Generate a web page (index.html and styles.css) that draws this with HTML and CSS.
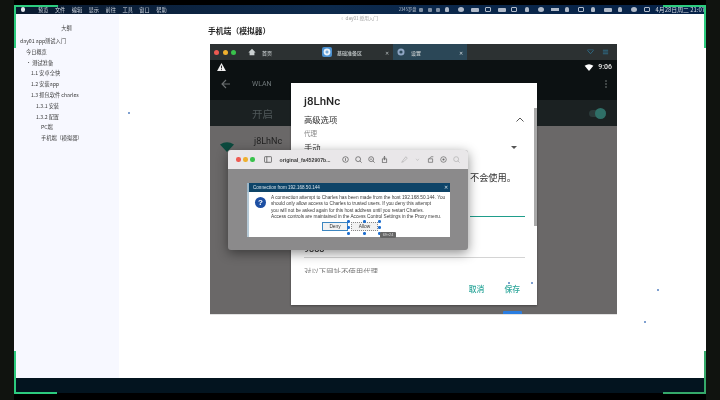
FILE: index.html
```html
<!DOCTYPE html>
<html lang="zh-CN">
<head>
<meta charset="utf-8">
<title>day01 app测试入门</title>
<link rel="stylesheet" href="styles.css">
</head>
<body>
<div class="stage">
  <div class="screen">
    <div class="menubar">
      <div class="menu-left">
        <span class="apple"></span>
        <span>预览</span><span>文件</span><span>编辑</span><span>显示</span><span>前往</span><span>工具</span><span>窗口</span><span>帮助</span>
      </div>
      <div class="menu-right">
        <span class="menu-app">2345罗盘</span>
        <span class="tray t-s"></span><span class="tray t-s"></span><span class="tray t-s"></span>
        <span class="tray t-d"></span><span class="tray t-a"></span><span class="tray t-b"></span><span class="tray t-c"></span><span class="tray t-b"></span><span class="tray t-c"></span><span class="tray t-d"></span><span class="tray t-a"></span><span class="tray t-e"></span><span class="tray t-d"></span><span class="tray t-c"></span><span class="tray t-d"></span><span class="tray t-b"></span><span class="tray t-d"></span><span class="tray t-a"></span><span class="tray t-c"></span>
        <span class="clock">4月28日周二 21:07</span>
      </div>
    </div>
    <div class="page">
      <aside class="outline">
        <div class="outline-head">大纲</div>
        <ul class="outline-list">
          <li class="l0">day01 app测试入门</li>
          <li class="l1">今日概览</li>
          <li class="l1">· 测试准备</li>
          <li class="l2">1.1 安卓全快</li>
          <li class="l2">1.2 安装app</li>
          <li class="l2">1.3 抓包软件 charles</li>
          <li class="l3">1.3.1 安装</li>
          <li class="l3">1.3.2 配置</li>
          <li class="l4">PC端</li>
          <li class="l4">手机端（模拟器）</li>
        </ul>
      </aside>
      <main class="doc">
        <div class="doc-title">▫ day01 授用入门</div>
        <h2 class="doc-h">手机端（模拟器）</h2>
        <section class="emu">
          <div class="tabs">
            <div class="lights"><i class="red"></i><i class="amber"></i><i class="green"></i></div>
            <div class="tab tab-home">
              <svg class="tab-ico" viewBox="0 0 10 10"><path d="M5 1 0.5 5.500H2V9H8V5.500H9.500Z" fill="#c9cfd0"/></svg>
              <span>首页</span>
            </div>
            <div class="tab tab-sim">
              <svg class="tab-ico sim-ico" viewBox="0 0 10 10"><rect width="10" height="10" rx="2" fill="#4a90d0"/><circle cx="5" cy="5" r="3.400" fill="#e8f1fa"/><path d="M3.400 5H6.600M5 3.400V6.600" stroke="#4a90d0" stroke-width="1"/></svg>
              <span>基础准备区</span>
              <b class="x">✕</b>
            </div>
            <div class="tab tab-set">
              <svg class="tab-ico" viewBox="0 0 10 10"><circle cx="5" cy="5" r="4.400" fill="#8fa6c4"/><circle cx="5" cy="5" r="2" fill="#2c4a5c"/></svg>
              <span>设置</span>
              <b class="x">✕</b>
            </div>
            <div class="win-btns">
              <svg viewBox="0 0 8 6" class="win-ico"><path d="M.5 1 4 5 7.500 1" fill="none" stroke="#2f6f8c"/><path d="M.5 .5H7.500" stroke="#2f6f8c" stroke-width=".6"/></svg>
              <svg viewBox="0 0 8 6" class="win-ico"><path d="M1 1H7M1 3H7M1 5H7" stroke="#2f6f8c"/></svg>
            </div>
          </div>
          <div class="status">
            <svg class="warn" viewBox="0 0 10 9"><path d="M5 0 10 9H0Z" fill="#f1f1f1"/><path d="M5 3V6M5 7V8" stroke="#111"/></svg>
            <svg class="wifi" viewBox="0 0 10 8"><path d="M0 2Q5-1.500 10 2L5 8Z" fill="#fff"/></svg>
            <span class="time">9:06</span>
          </div>
          <div class="appbar">
            <svg class="back" viewBox="0 0 10 10"><path d="M9 5H1.500M5 1 1 5 5 9" fill="none" stroke="#6b7071" stroke-width="1.100"/></svg>
            <span class="appbar-t">WLAN</span>
            <span class="dots"><i></i><i></i><i></i></span>
          </div>
          <div class="toggle-row">
            <span>开启</span>
            <span class="switch"><i></i></span>
          </div>
          <div class="net-row">
            <svg class="net-wifi" viewBox="0 0 14 10"><path d="M0 2.500Q7-2 14 2.500L7 10Z" fill="#0c4a3e"/></svg>
            <span>j8LhNc</span>
          </div>

          <div class="dialog">
            <h3>j8LhNc</h3>
            <div class="adv"><span>高级选项</span><svg viewBox="0 0 8 5" class="chev"><path d="M.5 4.500 4 1 7.500 4.500" fill="none" stroke="#555" stroke-width="1"/></svg></div>
            <div class="lbl">代理</div>
            <div class="sel"><span>手动</span><i class="caret"></i></div>
            <div class="warn-t">不会使用。</div>
            <div class="green-line"></div>
            <div class="port">9888</div>
            <div class="port-line"></div>
            <div class="bypass"><span>对以下网址不使用代理</span></div>
            <div class="actions"><span>取消</span><span>保存</span></div>
            <div class="scroll"></div>
          </div>

          <div class="preview">
            <div class="pv-bar">
              <div class="lights pv-lights"><i class="red"></i><i class="amber"></i><i class="green"></i></div>
              <svg class="pv-ico pv-side" viewBox="0 0 10 8"><rect x=".5" y=".5" width="9" height="7" rx="1" fill="none" stroke="#555"/><path d="M3.500 .5V7.500" stroke="#555"/></svg>
              <span class="pv-name">original_fa452907b...</span>
              <div class="pv-tools">
                <svg class="pv-ico" viewBox="0 0 10 10"><circle cx="5" cy="5" r="4" fill="none" stroke="#555"/><path d="M5 3V7" stroke="#555"/></svg>
                <svg class="pv-ico" viewBox="0 0 10 10"><circle cx="4.500" cy="4.500" r="3.500" fill="none" stroke="#555"/><path d="M7 7 9.500 9.500" stroke="#555"/></svg>
                <svg class="pv-ico" viewBox="0 0 10 10"><circle cx="4.500" cy="4.500" r="3.500" fill="none" stroke="#555"/><path d="M7 7 9.500 9.500M3 4.500H6" stroke="#555"/></svg>
                <svg class="pv-ico" viewBox="0 0 10 10"><path d="M2 4H8V9.500H2ZM5 6V.5M3.500 2 5 .5 6.500 2" fill="none" stroke="#555"/></svg>
                <svg class="pv-ico faint gap" viewBox="0 0 10 10"><path d="M1 9 3 6 7 1 9 3 4 8Z" fill="none" stroke="#999"/></svg>
                <svg class="pv-ico faint" viewBox="0 0 10 10"><path d="M3 4 5 6.500 7 4" fill="none" stroke="#aaa"/></svg>
                <svg class="pv-ico" viewBox="0 0 10 10"><path d="M2 4H8V9H2ZM3 4Q5 0 9 1" fill="none" stroke="#666"/></svg>
                <svg class="pv-ico" viewBox="0 0 10 10"><circle cx="5" cy="5" r="4" fill="none" stroke="#666"/><circle cx="5" cy="5" r="1.500" fill="#666"/></svg>
                <svg class="pv-ico faint" viewBox="0 0 10 10"><circle cx="4.500" cy="4.500" r="3.500" fill="none" stroke="#999"/><path d="M7 7 9.500 9.500" stroke="#999"/></svg>
              </div>
            </div>
            <div class="pv-body">
              <div class="charles">
                <div class="ch-title"><span>Connection from 192.168.50.144</span><b>✕</b></div>
                <div class="ch-body">
                  <div class="ch-msg">
                    <span class="q">?</span>
                    <p>A connection attempt to Charles has been made from the host 192.168.50.144. You<br>should only allow access to Charles to trusted users. If you deny this attempt<br>you will not be asked again for this host address until you restart Charles.<br>Access controls are maintained in the Access Control Settings in the Proxy menu.</p>
                  </div>
                  <div class="ch-btns">
                    <span class="btn deny">Deny</span>
                    <span class="btn allow">Allow</span>
                  </div>
                </div>
                <i class="h h1"></i><i class="h h2"></i><i class="h h3"></i><i class="h h4"></i><i class="h h5"></i><i class="h h6"></i><i class="h h7"></i><i class="h h8"></i>
                <span class="tip">69×24</span>
              </div>
            </div>
          </div>
          <div class="blue-tag"></div>
        </section>
        <i class="speck s1"></i><i class="speck s2"></i><i class="speck s3"></i><i class="speck s4"></i><i class="speck s5"></i>
      </main>
    </div>
    <div class="dock"></div>
  </div>
  <i class="corner tl-h"></i><i class="corner tl-v"></i>
  <i class="corner tr-h"></i><i class="corner tr-v"></i>
  <i class="corner bl-h"></i><i class="corner bl-v"></i>
  <i class="corner br-h"></i><i class="corner br-v"></i>
</div>
</body>
</html>
```

FILE: styles.css
```css
* { box-sizing: border-box; }
html, body { margin: 0; padding: 0; width: 720px; height: 400px; overflow: hidden; background: #10130f; }
body { font-family: "Noto Sans CJK SC", "Liberation Sans", sans-serif; }
i, b { font-style: normal; font-weight: normal; }

.stage { position: relative; width: 720px; height: 400px; padding: 0 14px; background: #10130f; filter: blur(0.35px); }
.screen { display: flex; flex-direction: column; width: 692px; height: 400px; padding-top: 5px; background: #000; }

/* menubar */
.menubar { flex: 0 0 9px; display: flex; align-items: center; justify-content: space-between; background: linear-gradient(90deg, #0a1a30, #0d2a4c 45%, #062248 100%); color: #d5dbe4; font-size: 5.2px; line-height: 9px; }
.menu-left { display: flex; align-items: center; padding-left: 7px; gap: 6.500px; }
.apple { width: 4px; height: 5px; border-radius: 2px; background: #e4e8ee; margin-right: 6.500px; }
.menu-right { display: flex; align-items: center; padding-right: 1px; }
.menu-app { margin-right: 3px; opacity: .85; font-size: 4.200px; white-space: nowrap; }
.tray { display: block; height: 5px; background: #cfd6e0; opacity: .85; }
.t-a { width: 6px; margin-right: 7.300px; border-radius: 50%; }
.t-b { width: 8px; margin-right: 5.300px; height: 4px; border-radius: 1px; }
.t-c { width: 6px; margin-right: 7.300px; background: transparent; border: 1px solid #cfd6e0; border-radius: 1px; }
.t-d { width: 4px; margin-right: 9.300px; border-radius: 2px 2px 1px 1px; }
.t-e { width: 8px; margin-right: 5.300px; height: 3px; }
.t-s { width: 4px; height: 4px; margin-right: 4.500px; opacity: .6; border-radius: 1px; }
.clock { font-size: 5.900px; margin-left: -2px; white-space: nowrap; }

/* page */
.page { flex: 0 0 364px; display: flex; background: #fff; }
.outline { flex: 0 0 105px; background: #f7f8ff; color: #3a3a3a; font-size: 5.200px; }
.outline-head { text-align: center; padding: 9px 0 0; height: 22px; line-height: 10px; }
.outline-list { list-style: none; margin: 0; padding: 0; }
.outline-list li { height: 10.800px; line-height: 10.800px; white-space: nowrap; }
.l0 { padding-left: 6px; }
.l1 { padding-left: 12px; }
.l2 { padding-left: 17px; }
.l3 { padding-left: 22px; }
.l4 { padding-left: 27px; }

.doc { position: relative; flex: 1; padding-left: 89px; }
.doc-title { height: 8px; padding-left: 132px; font-size: 4.600px; line-height: 8px; color: #9a9a9a; white-space: nowrap; }
.doc-h { margin: 3px 0 0; height: 12px; font-size: 7.800px; line-height: 12px; font-weight: 700; color: #2a2a2a; }

/* emulator */
.emu { position: relative; width: 407px; height: 271px; margin: 7px 0 0 2px; display: flex; flex-direction: column; background: #6a6868; border-bottom: 1px solid #e2e2e2; overflow: hidden; }
.tabs { flex: 0 0 16px; display: flex; align-items: center; background: #2c3132; color: #c2c8c9; font-size: 5px; font-weight: 500; }
.lights { display: flex; gap: 3.500px; padding-left: 4px; }
.lights i { width: 5px; height: 5px; border-radius: 50%; }
.red { background: #ee5a52; }
.amber { background: #efb02e; }
.green { background: #39c24c; }
.tab { display: flex; align-items: center; height: 16px; }
.tab-ico { width: 8px; height: 8px; margin-right: 6px; }
.tab-home { margin-left: 12px; width: 74px; }
.tab-sim { width: 71px; }
.tab-sim .sim-ico { width: 10px; height: 10px; margin-right: 5px; }
.tab-sim .x { margin-left: 23px; }
.tab-set { width: 74px; padding-left: 4px; background: #2b4757; }
.tab-set .x { margin-left: 38px; color: #d5dde0; }
.x { font-size: 5px; color: #b9bfc0; }
.win-btns { margin-left: auto; display: flex; gap: 8px; padding-right: 8px; }
.win-ico { width: 7px; height: 6px; }

.status { flex: 0 0 14px; display: flex; align-items: center; padding: 0 5px 0 7px; background: #0c1112; color: #e8e8e8; font: 500 7px/8px Roboto, sans-serif; }
.warn { width: 9px; height: 8px; }
.wifi { width: 10px; height: 7px; margin-left: auto; margin-right: 4px; }
.appbar { flex: 0 0 26px; display: flex; align-items: center; padding: 0 10px 6px 11px; background: #0c1112; color: #70787a; font: 7px/10px Roboto, sans-serif; }
.back { width: 10px; height: 10px; margin-right: 21px; }
.dots { margin-left: auto; display: flex; flex-direction: column; gap: 1px; }
.dots i { width: 2px; height: 2px; border-radius: 50%; background: #4e5455; }
.toggle-row { flex: 0 0 26px; display: flex; align-items: center; justify-content: space-between; padding: 0 11px 0 42px; background: #1b2122; color: #50585a; font-size: 10.500px; }
.switch { position: relative; display: block; width: 17px; height: 7px; border-radius: 4px; background: #2b3a3a; }
.switch i { position: absolute; right: 0; top: -2px; width: 11px; height: 11px; border-radius: 50%; background: #2f6f67; }
.net-row { flex: 1; display: flex; align-items: flex-start; padding: 9px 0 0 10px; color: #1f1f1f; font: 9px/13px Roboto, sans-serif; }
.net-wifi { width: 14px; height: 10px; margin: 7px 20px 0 0; }

/* android dialog */
.dialog { position: absolute; left: 81px; top: 39px; width: 246px; height: 222px; padding: 10px 12px 0 13px; background: #fff; color: #2c2c2c; box-shadow: 0 1px 2px rgba(0,0,0,.35); }
.dialog h3 { margin: 0; font: 500 11.500px/16px Roboto, sans-serif; color: #262626; }
.adv { display: flex; justify-content: space-between; align-items: center; height: 12px; margin-top: 4px; font-size: 8.300px; line-height: 12px; }
.chev { width: 8px; height: 5px; margin-right: 1px; }
.lbl { margin-top: 2px; height: 12px; line-height: 12px; font-size: 6.500px; color: #8a8a8a; }
.sel { display: flex; justify-content: space-between; align-items: center; height: 14px; margin-top: 1px; padding-right: 8px; font-size: 8.300px; }
.caret { border: 3px solid transparent; border-top: 3.500px solid #555; border-bottom: 0; }
.warn-t { margin-top: 16px; height: 14px; padding-left: 166px; font-size: 9.200px; line-height: 14px; color: #333; white-space: nowrap; }
.green-line { margin: 32px 0 0 166px; height: 1px; background: #1f9d8b; }
.port { margin-top: 25px; height: 14px; font: 500 9px/14px Roboto, sans-serif; color: #333; }
.port-line { margin-top: 1px; height: 1px; background: #d4d4d4; }
.bypass { margin-top: 8px; height: 7px; overflow: hidden; font-size: 7.400px; line-height: 10px; color: #777; }
.actions { display: flex; justify-content: flex-end; gap: 20px; margin-top: 10px; padding-right: 5px; color: #2ea79b; font-size: 7.800px; line-height: 12px; font-weight: 500; }
.scroll { position: absolute; right: 0; top: 25px; width: 3px; height: 118px; background: #a9a9a9; }

/* macOS preview window */
.preview { position: absolute; left: 18px; top: 106px; width: 240px; height: 100px; border-radius: 3px; overflow: hidden; background: #8b8a8b; box-shadow: 0 3px 12px rgba(0,0,0,.45); }
.pv-bar { display: flex; align-items: center; height: 19px; background: #e9e7e9; }
.pv-lights { padding-left: 8px; gap: 2.500px; }
.pv-lights i { width: 4.500px; height: 4.500px; }
.pv-ico { flex: none; width: 7px; height: 7px; }
.pv-side { width: 8px; margin-left: 9px; }
.pv-name { margin-left: 8px; width: 58px; font-size: 5.200px; color: #3b3b3b; white-space: nowrap; font-family: "Liberation Sans", sans-serif; font-weight: 700; }
.pv-tools { display: flex; align-items: center; gap: 6px; margin-left: 4.500px; }
.gap { margin-left: 7px; }
.faint { opacity: .7; }
.pv-body { padding: 14px 18px 0 19px; }
.charles { position: relative; width: 203px; height: 54px; background: #fff; font-family: "Liberation Sans", sans-serif; color: #333; }
.ch-title { display: flex; justify-content: space-between; align-items: center; height: 9px; padding: 0 2px 0 4px; background: #0e4468; border-left: 2px solid #9bb6c8; color: #d6e2ea; font-size: 4.600px; line-height: 9px; }
.ch-body { height: 45px; border-left: 2px solid #b5c9d6; }
.ch-msg { display: flex; padding: 3px 0 0 6px; }
.q { flex: none; width: 11px; height: 11px; margin: 2px 5px 0 0; border-radius: 50%; background: #1d4fa3; color: #fff; text-align: center; font: 700 8px/11px "Liberation Sans", sans-serif; }
.ch-msg p { margin: 0; font-size: 4.730px; line-height: 6.400px; white-space: nowrap; color: #3a3a3a; }
.ch-btns { display: flex; gap: 3px; margin: 1px 0 0 73px; font-size: 4.800px; }
.btn { display: block; width: 26px; height: 9px; line-height: 7px; text-align: center; background: #f2f2f2; border: 1px solid #bbb; }
.deny { border-color: #3d86c0; }
.allow { width: 27px; border: 1px dotted #888; }
.h { position: absolute; width: 2.500px; height: 2.500px; background: #1f6fd0; border-radius: 50%; }
.h1 { left: 100px; top: 37px; } .h2 { left: 116px; top: 37px; } .h3 { left: 131px; top: 37px; }
.h4 { left: 100px; top: 43px; } .h5 { left: 131px; top: 43px; }
.h6 { left: 100px; top: 49px; } .h7 { left: 116px; top: 49px; } .h8 { left: 131px; top: 49px; }
.tip { position: absolute; left: 133px; top: 49px; width: 16px; height: 6px; background: #666; color: #ddd; font-size: 3.800px; line-height: 6px; text-align: center; border-radius: 1px; }

.blue-tag { position: absolute; left: 293px; top: 267px; width: 19px; height: 3px; background: #2a7de1; border-radius: 1px 1px 0 0; }

.speck { position: absolute; width: 1.500px; height: 1.500px; background: #7fa0d0; }
.s1 { left: 9px; top: 98px; }
.s2 { left: 538px; top: 275px; }
.s3 { left: 525px; top: 307px; }
.s4 { left: 389px; top: 268px; }
.s5 { left: 412px; top: 268px; }

.dock { flex: 0 0 15px; background: #03141f; }

/* recording frame corners */
.corner { position: absolute; background: #2ccb7e; }
.tl-h { left: 14px; top: 5px; width: 44px; height: 2px; }
.tl-v { left: 14px; top: 5px; width: 2px; height: 43px; }
.tr-h { left: 663px; top: 5px; width: 43px; height: 2px; }
.tr-v { left: 704px; top: 5px; width: 2px; height: 43px; }
.bl-h { left: 14px; top: 392px; width: 43px; height: 2px; }
.bl-v { left: 14px; top: 351px; width: 2px; height: 43px; }
.br-h { left: 663px; top: 392px; width: 43px; height: 2px; background: #35a96a; }
.br-v { left: 704px; top: 351px; width: 2px; height: 43px; background: #35a96a; }
```
